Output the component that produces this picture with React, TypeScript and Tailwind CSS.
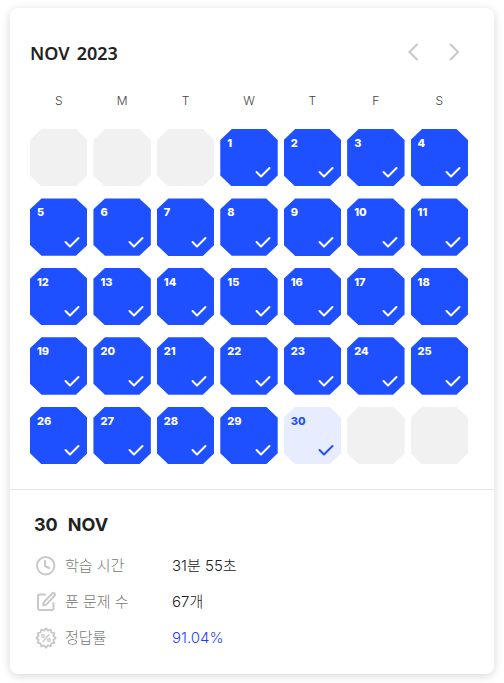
import type { ReactNode } from "react";
import { clsx } from "clsx";

type DayState = "empty" | "done" | "today";

type Day = {
	date: number | null;
	state: DayState;
};

const WEEKDAYS = ["S", "M", "T", "W", "T", "F", "S"];
const FIRST_WEEKDAY = 3;
const DAYS_IN_MONTH = 30;
const TODAY = 30;

function buildDays(): Day[] {
	return Array.from({ length: 35 }, (_, index) => {
		const date = index - FIRST_WEEKDAY + 1;
		if (date < 1 || date > DAYS_IN_MONTH) return { date: null, state: "empty" };
		return { date, state: date === TODAY ? "today" : "done" };
	});
}

const DAY_STYLES: Record<DayState, string> = {
	empty: "bg-[#f1f1f1]",
	done: "bg-[#1f50ff] text-white",
	today: "bg-[#e7ecff] text-[#1f50ff]",
};

export default function App() {
	return (
		<main className="px-[10px] pt-2 pb-[9px] bg-white font-['Inter','Noto_Sans_CJK_KR',sans-serif] text-[#222]">
			<div className="rounded-lg bg-white shadow-[0_2px_10px_rgba(0,0,0,0.16)]">
				<section className="pt-8 pl-5 pr-[26px] pb-[25px] border-b border-[#e8e8e8]">
					<header className="flex items-start justify-between">
						<h1 className="flex gap-[7px] font-['Noto_Sans',sans-serif] text-lg leading-[26px] font-semibold">
							<span>NOV</span>
							<span>2023</span>
						</h1>
						<nav className="flex gap-4 pr-[2px]">
							<ArrowButton label="이전 달" path="M15.5 4 7.5 12l8 8" />
							<ArrowButton label="다음 달" path="m8 4 8 8-8 8" />
						</nav>
					</header>

					<div className="mt-[26px] grid grid-cols-7 gap-x-[6px] text-center text-xs leading-[18px] font-light text-[#444]">
						{WEEKDAYS.map((name, index) => (
							<span key={index}>{name}</span>
						))}
					</div>

					<div className="mt-[19px] grid grid-cols-7 gap-x-[6px] gap-y-3">
						{buildDays().map((day, index) => (
							<DayCell key={index} day={day} />
						))}
					</div>
				</section>

				<section className="pt-[21px] pl-6 pr-6 pb-[18px]">
					<h2 className="flex gap-[10px] text-lg leading-7 font-bold">
						<span>30</span>
						<span>NOV</span>
					</h2>
					<dl className="mt-[9px]">
						<StatRow icon={<ClockIcon />} label="학습 시간" value="31분 55초" />
						<StatRow icon={<EditIcon />} label="푼 문제 수" value="67개" />
						<StatRow icon={<PercentIcon />} label="정답률" value="91.04%" highlight />
					</dl>
				</section>
			</div>
		</main>
	);
}

function ArrowButton({ label, path }: { label: string; path: string }) {
	return (
		<button type="button" aria-label={label} className="size-6">
			<svg viewBox="0 0 24 24" className="size-6" fill="none" stroke="#c8c8c8" strokeWidth="2">
				<path d={path} />
			</svg>
		</button>
	);
}

function DayCell({ day }: { day: Day }) {
	const className = clsx(
		"flex flex-col items-start justify-between aspect-square pt-2 pl-[7px] pr-[7px] pb-2",
		"[clip-path:polygon(20%_0,80%_0,100%_19%,100%_81%,80%_100%,20%_100%,0_81%,0_19%)]",
		DAY_STYLES[day.state],
	);

	if (day.date === null) return <div className={className} />;

	return (
		<button type="button" className={className}>
			<span className="text-[11px] leading-3 font-extrabold">{day.date}</span>
			<svg
				viewBox="0 0 16 12"
				className="self-end w-4 h-3"
				fill="none"
				stroke="currentColor"
				strokeWidth="2"
				strokeLinecap="round"
				strokeLinejoin="round"
			>
				<path d="m1.5 6 4.5 4.5L14.5 2" />
			</svg>
		</button>
	);
}

type StatRowProps = {
	icon: ReactNode;
	label: string;
	value: string;
	highlight?: boolean;
};

function StatRow({ icon, label, value, highlight }: StatRowProps) {
	return (
		<div className="flex items-center h-9 text-[15px] leading-6">
			<dt className="flex items-center gap-[7px] w-[138px] font-light text-[#777]">
				{icon}
				{label}
			</dt>
			<dd className={clsx("font-light", highlight ? "text-[#1f3fff]" : "text-[#222]")}>{value}</dd>
		</div>
	);
}

function StatIcon({ children }: { children: ReactNode }) {
	return (
		<svg
			viewBox="0 0 24 24"
			className="size-6"
			fill="none"
			stroke="#c8c8c8"
			strokeWidth="2"
			strokeLinecap="round"
			strokeLinejoin="round"
			aria-hidden="true"
		>
			{children}
		</svg>
	);
}

function ClockIcon() {
	return (
		<StatIcon>
			<circle cx="11.7" cy="11.7" r="8.7" />
			<path d="M11 7v5l4 2" />
		</StatIcon>
	);
}

function EditIcon() {
	return (
		<StatIcon>
			<path d="M11 4.5H6a2 2 0 0 0-2 2V18a2 2 0 0 0 2 2h11.5a2 2 0 0 0 2-2v-5" />
			<path d="M18.2 3.4a1.7 1.7 0 0 1 2.4 2.4L12.2 14.6l-3 .6.6-3z" />
		</StatIcon>
	);
}

// scalloped badge: outer and inner points alternate around the centre
const BADGE_POINTS = Array.from({ length: 24 }, (_, i) => {
	const radius = i % 2 === 0 ? 9.7 : 7.6;
	const angle = (i * Math.PI) / 12;
	return `${12 + radius * Math.sin(angle)},${12 - radius * Math.cos(angle)}`;
}).join(" ");

function PercentIcon() {
	return (
		<StatIcon>
			<polygon points={BADGE_POINTS} strokeWidth="1.8" />
			<path d="m15 8.5-6 7" strokeWidth="1.4" />
			<circle cx="9" cy="10" r="1.4" strokeWidth="1.3" />
			<circle cx="15" cy="14" r="1.4" strokeWidth="1.3" />
		</StatIcon>
	);
}
